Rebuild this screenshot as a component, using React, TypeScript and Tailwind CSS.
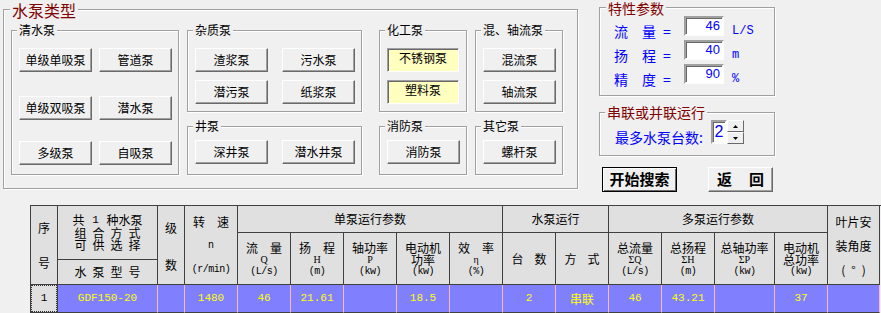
import React from 'react';

interface GroupProps {
  title: string;
  className?: string;
  titleClass?: string;
  children?: React.ReactNode;
}

const Group: React.FC<GroupProps> = ({ title, className = '', titleClass = 'left-[5px] top-[-8px] leading-[14px] text-[12px] text-black', children }) => (
  <div className={`relative border border-[#a0a0a0] shadow-[inset_1px_1px_0_#fff,1px_1px_0_#fff] ${className}`}>
    <span className={`absolute px-[2px] bg-[#f0f0f0] whitespace-nowrap ${titleClass}`}>{title}</span>
    {children}
  </div>
);

const Btn: React.FC<{ label: string; className?: string }> = ({ label, className = 'w-[73px]' }) => (
  <div className={`h-[24px] flex items-center justify-center bg-[#f0f0f0] border border-t-white border-l-white border-r-[#696969] border-b-[#696969] shadow-[inset_-1px_-1px_0_#a0a0a0] text-[12px] ${className}`}>
    {label}
  </div>
);

const YellowBtn: React.FC<{ label: string }> = ({ label }) => (
  <div className="w-[72px] h-[24px] flex justify-center pt-[2px] leading-[14px] bg-[#ffffc0] border border-t-[#a0a0a0] border-l-[#a0a0a0] border-r-white border-b-white shadow-[inset_1px_1px_0_#696969] text-[12px]">
    {label}
  </div>
);

const ParamRow: React.FC<{ a: string; b: string; value: string; unit: string }> = ({ a, b, value, unit }) => (
  <div className="flex items-start h-[20px]">
    <div className="w-[70px] flex pt-[7px] leading-[16px] text-[14px] text-[#0000ff]">
      <span className="w-[28px]">{a}</span>
      <span className="w-[21px]">{b}</span>
      <span>=</span>
    </div>
    <div className="w-[40px] h-[20px] bg-white border-2 border-t-[#a0a0a0] border-l-[#a0a0a0] border-b-white border-r-white shadow-[inset_1px_1px_0_#696969] flex items-center justify-end pr-[2px] font-['Liberation_Sans',sans-serif] text-[13px] text-[#0000ff]">
      {value}
    </div>
    <div className="ml-[8px] pt-[8px] leading-[14px] font-['Liberation_Mono',monospace] text-[12px] text-[#0000ff]">{unit}</div>
  </div>
);

const hd = 'border-r border-b border-[#404040] bg-[#e0e0e0] text-[12px]';

const Head3: React.FC<{ a: React.ReactNode; b: React.ReactNode; c: string; className: string; bCjk?: boolean }> = ({ a, b, c, className, bCjk }) => (
  <div className={`${hd} ${className} flex flex-col items-center pt-[9px]`}>
    <div className="leading-[12px] h-[12px] whitespace-nowrap">{a}</div>
    <div className={bCjk ? 'leading-[12px] h-[11px] whitespace-nowrap' : "leading-[11px] h-[11px] font-['Liberation_Serif',serif] text-[10px]"}>{b}</div>
    <div className="leading-[14px] h-[14px] font-['Liberation_Mono',monospace] text-[10px] tracking-[-0.5px]">{c}</div>
  </div>
);

const Pair: React.FC<{ a: string; b: string; gap?: string }> = ({ a, b, gap = 'gap-[12px]' }) => (
  <span className={`flex ${gap}`}>
    <span>{a}</span>
    <span>{b}</span>
  </span>
);

const rowData = ['GDF150-20', '', '1480', '46', '21.61', '', '18.5', '', '2', '串联', '46', '43.21', '', '37', ''];

export default function App() {
  return (
    <div className="w-[881px] h-[313px] bg-[#f0f0f0] overflow-hidden font-['Noto_Sans_CJK_SC',sans-serif] text-black">
      <div className="flex h-[205px]">
        <Group
          title="水泵类型"
          titleClass="left-[6px] top-[-8px] leading-[16px] text-[16px] text-[#800000]"
          className="ml-[3px] mt-[9px] w-[575px] h-[180px] flex items-start pl-[7px] pt-[20px]"
        >
          <Group title="清水泵" className="w-[168px] h-[145px] pl-[7px] pt-[17px] flex flex-col">
            <div className="flex gap-[7px]">
              <Btn label="单级单吸泵" />
              <Btn label="管道泵" />
            </div>
            <div className="flex gap-[7px] mt-[24px]">
              <Btn label="单级双吸泵" />
              <Btn label="潜水泵" />
            </div>
            <div className="flex gap-[7px] mt-[21px]">
              <Btn label="多级泵" />
              <Btn label="自吸泵" />
            </div>
          </Group>

          <div className="ml-[8px] flex flex-col">
            <Group title="杂质泵" className="w-[175px] h-[82px] pl-[7px] pt-[17px] flex flex-col gap-[8px]">
              <div className="flex gap-[14px]">
                <Btn label="渣浆泵" />
                <Btn label="污水泵" />
              </div>
              <div className="flex gap-[14px]">
                <Btn label="潜污泵" />
                <Btn label="纸浆泵" />
              </div>
            </Group>
            <Group title="井泵" className="mt-[14px] w-[175px] h-[49px] pl-[7px] pt-[13px] flex gap-[14px]">
              <Btn label="深井泵" />
              <Btn label="潜水井泵" />
            </Group>
          </div>

          <div className="ml-[17px] flex flex-col">
            <Group title="化工泵" className="w-[88px] h-[82px] pl-[7px] pt-[17px] flex flex-col gap-[8px]">
              <YellowBtn label="不锈钢泵" />
              <YellowBtn label="塑料泵" />
            </Group>
            <Group title="消防泵" className="mt-[14px] w-[88px] h-[49px] pl-[7px] pt-[13px] flex">
              <Btn label="消防泵" />
            </Group>
          </div>

          <div className="ml-[8px] flex flex-col">
            <Group title="混、轴流泵" className="w-[88px] h-[82px] pl-[7px] pt-[17px] flex flex-col gap-[8px]">
              <Btn label="混流泵" />
              <Btn label="轴流泵" />
            </Group>
            <Group title="其它泵" className="mt-[14px] w-[88px] h-[49px] pl-[7px] pt-[13px] flex">
              <Btn label="螺杆泵" />
            </Group>
          </div>
        </Group>

        <div className="ml-[21px] mt-[7px] w-[176px] flex flex-col">
          <Group
            title="特性参数"
            titleClass="left-[6px] top-[-7px] leading-[14px] text-[14px] text-[#800000]"
            className="w-[176px] h-[89px] pl-[14px] pt-[8px] flex flex-col gap-[4px]"
          >
            <ParamRow a="流" b="量" value="46" unit="L/S" />
            <ParamRow a="扬" b="程" value="40" unit="m" />
            <ParamRow a="精" b="度" value="90" unit="%" />
          </Group>

          <Group
            title="串联或并联运行"
            titleClass="left-[5px] top-[-9px] leading-[16px] text-[14px] text-[#800000]"
            className="mt-[16px] w-[176px] h-[44px] pl-[15px] pt-[7px] flex items-start"
          >
            <div className="w-[96px] pt-[9px] leading-[16px] text-[14px] text-[#0000ff] whitespace-nowrap">最多水泵台数:</div>
            <div className="w-[16px] h-[24px] bg-white border-2 border-t-[#a0a0a0] border-l-[#a0a0a0] border-b-white border-r-white shadow-[inset_1px_1px_0_#696969] flex items-center justify-center font-['Liberation_Sans',sans-serif] text-[16px] text-[#0000ff]">
              2
            </div>
            <div className="w-[17px] h-[24px] flex flex-col">
              <div className="h-[12px] flex items-center justify-center bg-[#f0f0f0] border border-t-white border-l-white border-r-[#696969] border-b-[#696969]">
                <svg width="5" height="3" viewBox="0 0 5 3"><path d="M2.5 0 L5 3 L0 3 Z" fill="#000" /></svg>
              </div>
              <div className="h-[12px] flex items-center justify-center bg-[#f0f0f0] border border-t-white border-l-white border-r-[#696969] border-b-[#696969]">
                <svg width="5" height="3" viewBox="0 0 5 3"><path d="M0 0 L5 0 L2.5 3 Z" fill="#000" /></svg>
              </div>
            </div>
          </Group>

          <div className="mt-[11px] flex">
            <div className="ml-[3px] w-[75px] h-[25px] flex items-center justify-center bg-[#f0f0f0] border border-black shadow-[inset_1px_1px_0_#fff,inset_-1px_-1px_0_#696969] text-[15px] font-bold">
              开始搜索
            </div>
            <div className="ml-[31px] w-[65px] h-[25px] flex items-center justify-center gap-[17px] bg-[#f0f0f0] border border-t-white border-l-white border-r-[#696969] border-b-[#696969] shadow-[inset_-1px_-1px_0_#a0a0a0] text-[15px] font-bold">
              <span>返</span>
              <span>回</span>
            </div>
          </div>
        </div>
      </div>

      <div className="ml-[30px] w-[851px] grid grid-cols-[27px_100px_27px_53px_53px_53px_53px_53px_53px_53px_53px_53px_53px_60px_53px_52px] grid-rows-[27px_27px_25px_28px] border-l border-t border-[#404040]">
        <div className={`${hd} col-start-1 row-start-1 row-span-3 flex flex-col items-center pt-[15px] gap-[21px] leading-[14px]`}>
          <span>序</span>
          <span>号</span>
        </div>
        <div className={`${hd} col-start-2 row-start-1 row-span-2 flex flex-col items-center pt-[8px] leading-[12.5px]`}>
          <div className="w-[70px] flex justify-between"><span>共</span><span className="font-['Liberation_Mono',monospace] text-[11px]">1</span><span>种水泵</span></div>
          <div className="w-[66px] flex justify-between"><span>组</span><span>合</span><span>方</span><span>式</span></div>
          <div className="w-[66px] flex justify-between"><span>可</span><span>供</span><span>选</span><span>择</span></div>
        </div>
        <div className={`${hd} col-start-2 row-start-3 flex items-center justify-center`}>
          <div className="w-[66px] flex justify-between"><span>水</span><span>泵</span><span>型</span><span>号</span></div>
        </div>
        <div className={`${hd} col-start-3 row-start-1 row-span-3 flex flex-col items-center pt-[15px] gap-[23px] leading-[14px]`}>
          <span>级</span>
          <span>数</span>
        </div>
        <div className={`${hd} col-start-4 row-start-1 row-span-3 flex flex-col items-center pt-[4px] leading-[24px]`}>
          <Pair a="转" b="速" />
          <span className="font-['Liberation_Mono',monospace] text-[10px]">n</span>
          <span className="font-['Liberation_Mono',monospace] text-[10px] tracking-[-0.5px]">(r/min)</span>
        </div>
        <div className={`${hd} col-start-5 col-span-5 row-start-1 flex items-center justify-center`}>单泵运行参数</div>
        <div className={`${hd} col-start-10 col-span-2 row-start-1 flex items-center justify-center`}>水泵运行</div>
        <div className={`${hd} col-start-12 col-span-4 row-start-1 flex items-center justify-center`}>多泵运行参数</div>
        <div className={`${hd} col-start-16 row-start-1 row-span-3 flex flex-col items-center pt-[4px] leading-[24px]`}>
          <span>叶片安</span>
          <span>装角度</span>
          <span className="flex gap-[6px]"><span>(</span><span>°</span><span>)</span></span>
        </div>

        <Head3 className="col-start-5 row-start-2 row-span-2" a={<Pair a="流" b="量" />} b="Q" c="(L/s)" />
        <Head3 className="col-start-6 row-start-2 row-span-2" a={<Pair a="扬" b="程" />} b="H" c="(m)" />
        <Head3 className="col-start-7 row-start-2 row-span-2" a="轴功率" b="P" c="(kw)" />
        <Head3 className="col-start-8 row-start-2 row-span-2" a="电动机" b="功率" c="(kw)" bCjk />
        <Head3 className="col-start-9 row-start-2 row-span-2" a={<Pair a="效" b="率" />} b="η" c="(%)" />
        <div className={`${hd} col-start-10 row-start-2 row-span-2 flex items-center justify-center`}>
          <Pair a="台" b="数" gap="gap-[11px]" />
        </div>
        <div className={`${hd} col-start-11 row-start-2 row-span-2 flex items-center justify-center`}>
          <Pair a="方" b="式" gap="gap-[11px]" />
        </div>
        <Head3 className="col-start-12 row-start-2 row-span-2" a="总流量" b="ΣQ" c="(L/s)" />
        <Head3 className="col-start-13 row-start-2 row-span-2" a="总扬程" b="ΣH" c="(m)" />
        <Head3 className="col-start-14 row-start-2 row-span-2" a="总轴功率" b="ΣP" c="(kw)" />
        <Head3 className="col-start-15 row-start-2 row-span-2" a="电动机" b="总功率" c="(kw)" bCjk />

        <div className="border-r border-b border-[#404040] bg-[#e0e0e0] col-start-1 row-start-4">
          <div className="h-full border border-dotted border-[#303030] flex items-center justify-center font-['Liberation_Mono',monospace] text-[11px]">1</div>
        </div>
        {rowData.map((v, i) => (
          <div
            key={i}
            className="row-start-4 border-r border-b border-r-[#ffb8c8] border-b-[#404040] bg-[#8080ff] text-[#ffff00] flex items-center justify-center font-['Liberation_Mono','Noto_Sans_CJK_SC',monospace] text-[11px]"
          >
            {v === '串联' ? <span className="font-['Noto_Sans_CJK_SC',sans-serif] text-[12px]">{v}</span> : v}
          </div>
        ))}
      </div>
    </div>
  );
}
